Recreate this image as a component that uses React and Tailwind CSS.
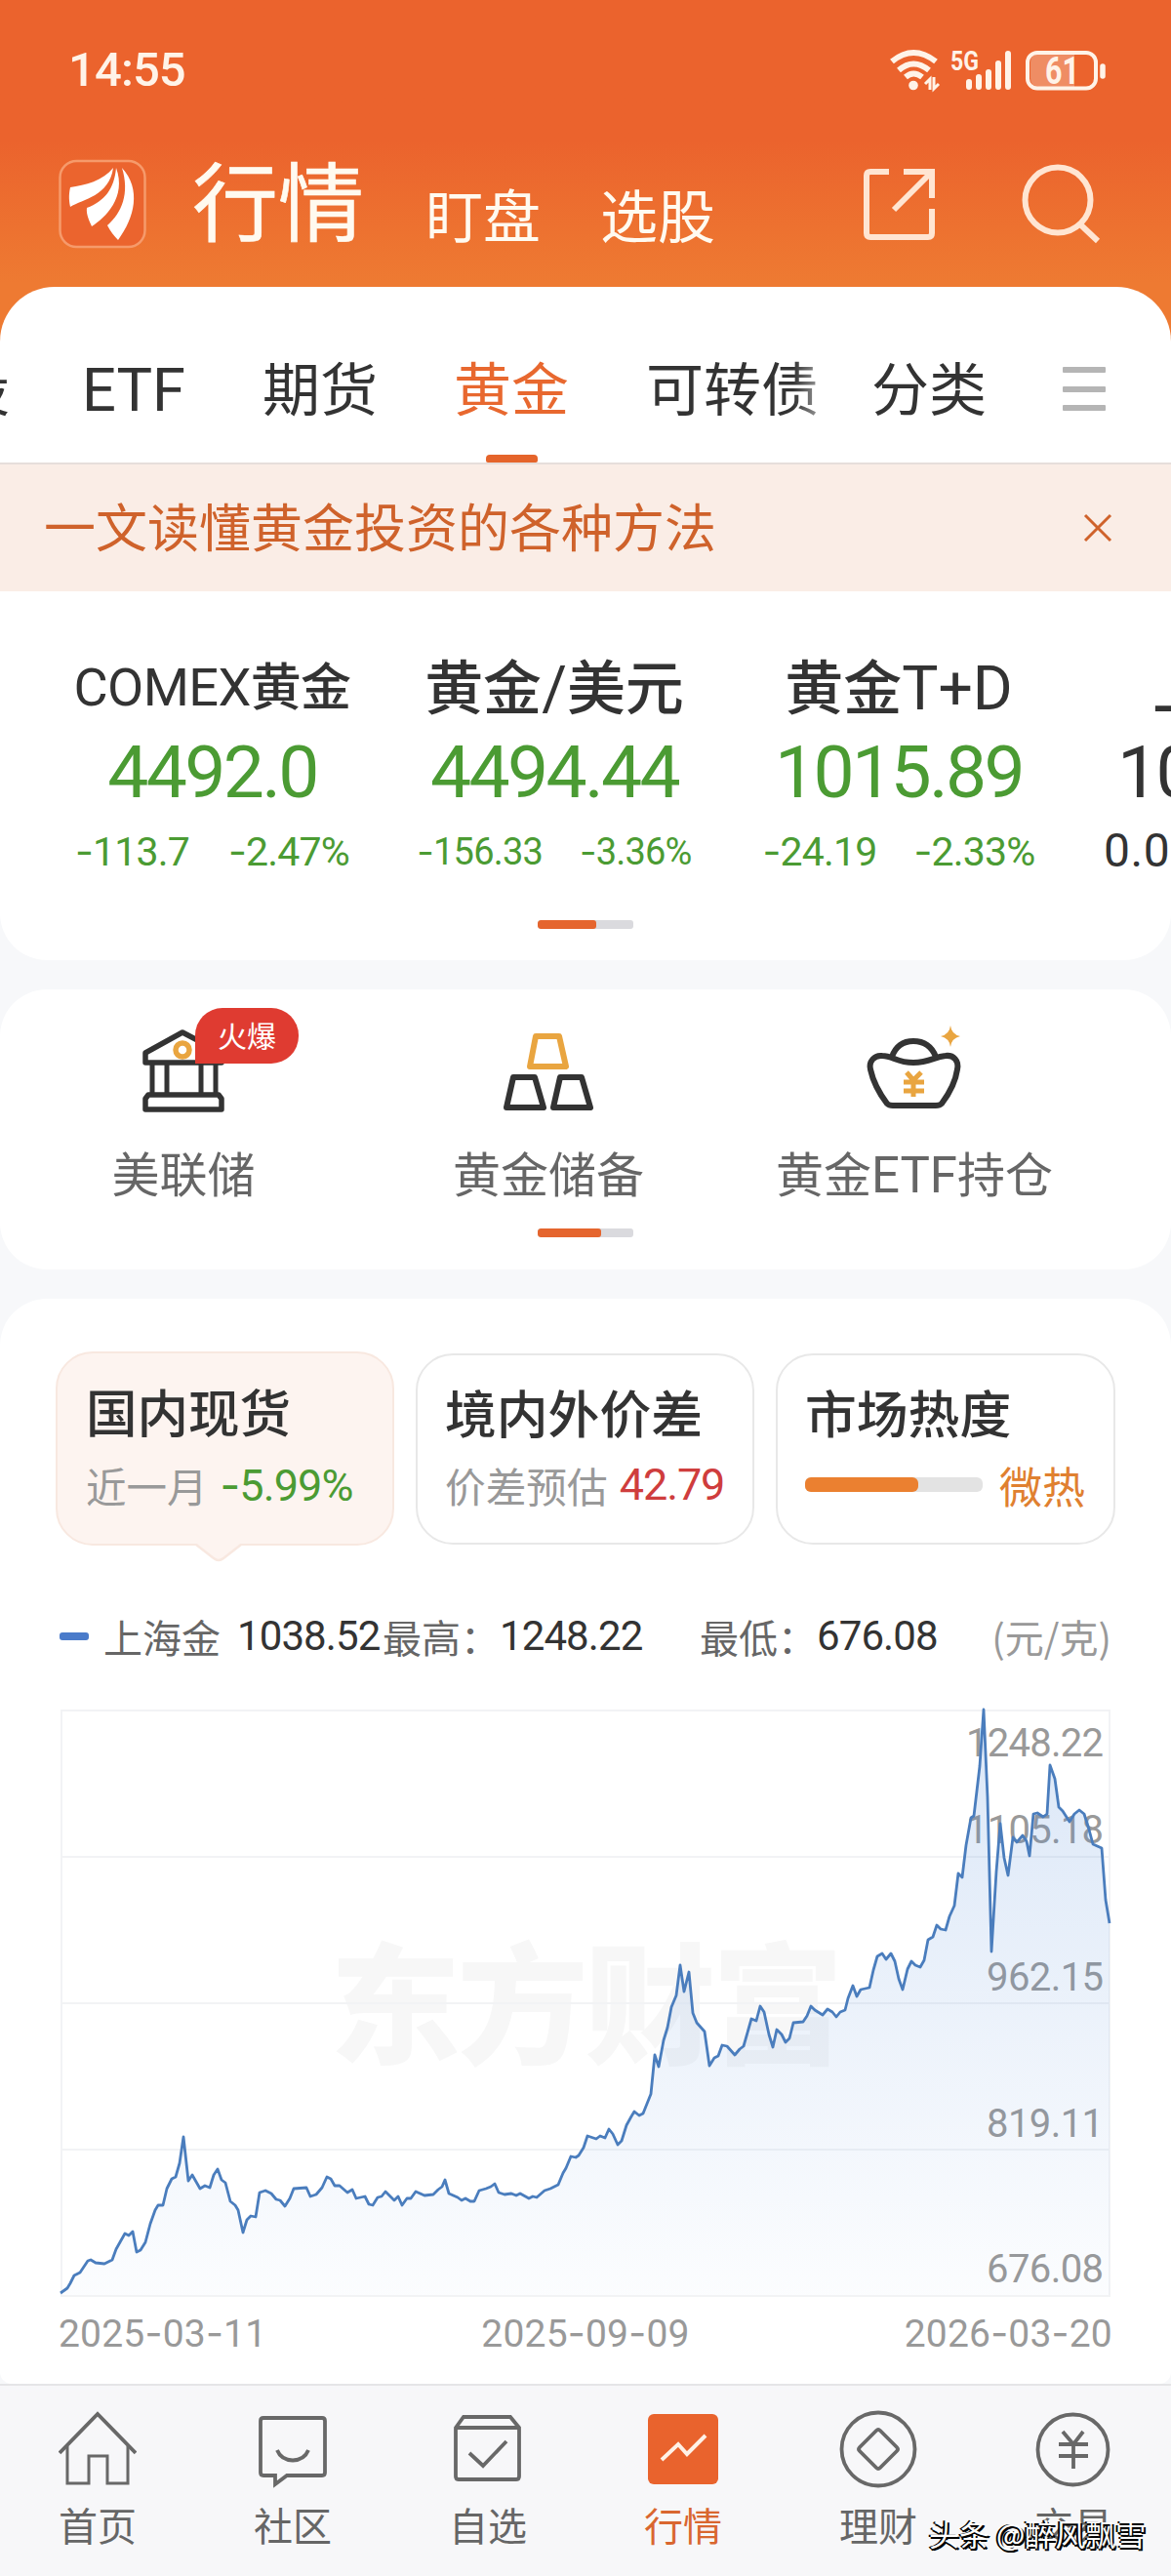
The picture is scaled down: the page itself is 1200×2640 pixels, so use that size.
import { clsx } from "clsx";

const quotes = [
  {
    name: "COMEX黄金",
    price: "4492.0",
    change: "-113.7",
    percent: "-2.47%",
    box: "ml-[55px] w-[325px]",
    title: "text-[52px] tracking-[-0.600px]",
    detail: "text-[41px] tracking-[-0.800px] gap-[40px]",
  },
  {
    name: "黄金/美元",
    price: "4494.44",
    change: "-156.33",
    percent: "-3.36%",
    box: "ml-[27px] w-[322px]",
    title: "text-[60px]",
    detail: "text-[38px] tracking-[-0.800px] gap-[38px]",
  },
  {
    name: "黄金T+D",
    price: "1015.89",
    change: "-24.19",
    percent: "-2.33%",
    box: "ml-[32px] w-[320px]",
    title: "text-[60px]",
    detail: "text-[41px] tracking-[-0.800px] gap-[38px]",
  },
];

const chartPoints = [
  [0, 598], [7, 593], [10, 588], [14, 580], [20, 577], [28, 565], [31, 564], [36, 567], [45, 568], [53, 564],
  [57, 553], [66, 537], [70, 539], [74, 535], [78, 556], [82, 554], [87, 546], [92, 527], [97, 513], [100, 508],
  [105, 508], [109, 491], [114, 481], [118, 479], [122, 465], [126, 438], [131, 483], [135, 477], [143, 491], [148, 488],
  [153, 490], [157, 477], [161, 471], [165, 482], [169, 485], [174, 504], [179, 508], [182, 513], [187, 536], [191, 523],
  [195, 519], [200, 520], [204, 495], [210, 493], [216, 496], [221, 502], [225, 503], [230, 509], [235, 501], [239, 491],
  [252, 490], [256, 499], [262, 497], [268, 490], [273, 479], [277, 481], [281, 488], [286, 488], [294, 495], [299, 492],
  [303, 501], [312, 499], [316, 507], [320, 508], [325, 500], [329, 499], [333, 494], [342, 503], [346, 499], [350, 508],
  [355, 501], [359, 501], [364, 494], [373, 498], [382, 497], [387, 492], [391, 489], [394, 482], [398, 496], [407, 500],
  [411, 503], [415, 501], [420, 504], [424, 504], [429, 493], [436, 491], [441, 489], [445, 486], [449, 495], [455, 497],
  [462, 496], [467, 498], [471, 496], [480, 501], [484, 499], [488, 500], [496, 493], [502, 491], [510, 487], [515, 475],
  [518, 470], [523, 458], [528, 459], [531, 457], [536, 449], [540, 437], [549, 440], [553, 437], [558, 439], [562, 430],
  [566, 435], [571, 446], [575, 442], [580, 426], [585, 417], [588, 412], [593, 416], [597, 414], [601, 404], [605, 394],
  [609, 354], [613, 366], [618, 339], [622, 326], [626, 305], [631, 293], [635, 262], [639, 289], [644, 269], [648, 311],
  [652, 321], [660, 330], [665, 365], [670, 357], [674, 355], [678, 344], [683, 345], [691, 354], [696, 348], [700, 345],
  [704, 331], [708, 317], [713, 319], [717, 304], [721, 310], [726, 333], [730, 346], [734, 328], [739, 333], [743, 341],
  [747, 337], [751, 321], [761, 320], [765, 314], [769, 304], [773, 308], [781, 313], [786, 307], [791, 310], [795, 315],
  [799, 310], [804, 308], [807, 296], [812, 283], [816, 294], [820, 287], [829, 285], [833, 267], [837, 253], [842, 250],
  [846, 256], [851, 250], [855, 258], [859, 276], [863, 287], [868, 266], [872, 258], [876, 262], [881, 264], [885, 257],
  [889, 236], [894, 233], [898, 221], [902, 225], [907, 226], [911, 212], [916, 201], [920, 168], [924, 172], [928, 139],
  [933, 111], [936, 109], [942, 58], [946, 0], [950, 90], [954, 248], [959, 166], [963, 117], [967, 152], [971, 170],
  [976, 131], [980, 136], [986, 129], [990, 135], [993, 150], [997, 107], [1001, 106], [1007, 110], [1011, 107], [1014, 57],
  [1019, 71], [1023, 100], [1027, 104], [1034, 115], [1039, 107], [1044, 103], [1049, 107], [1054, 123], [1058, 138],
  [1067, 142], [1071, 195], [1075, 219],
];

const priceLabels = [
  { text: "1248.22", y: 48 },
  { text: "1105.18", y: 137 },
  { text: "962.15", y: 288 },
  { text: "819.11", y: 438 },
  { text: "676.08", y: 587 },
];

// Roboto digits with the longer Inter minus
function Num({ children, className }) {
  return (
    <span className={clsx("font-[Roboto]", className)}>
      {children.split(/(-)/).map((part, i) =>
        part === "-" ? <span key={i} className="font-[Inter]">-</span> : part
      )}
    </span>
  );
}

// latin runs inside a chinese label
function Mixed({ children }) {
  return children.split(/([A-Z/+]+)/).map((part, i) =>
    /^[A-Z/+]+$/.test(part) ? <span key={i} className="font-[Roboto] text-[1.04em] font-normal">{part}</span> : part
  );
}

function StatusBar() {
  return (
    <div className="flex h-[145px] pl-[70px] pr-[65px] text-[#fff3e8]">
      <span className="mt-[46px] font-[Roboto] text-[49px] leading-[52px] font-medium tracking-[-0.900px]">14:55</span>
      <svg className="mt-[48px] ml-auto" width="224" height="48" viewBox="0 0 224 48" fill="none" stroke="currentColor">
        <g strokeWidth="6">
          <path d="M3 15Q25 -3 48 15" />
          <path d="M10 24Q25 11 41 24" />
          <path d="M17 31Q25 24 34 31" />
        </g>
        <circle cx="25" cy="39.500" r="4.800" fill="currentColor" stroke="none" />
        <path d="M42 44V33L37 38M46 31V43L51 38" strokeWidth="3" />
        <g strokeWidth="6" strokeLinecap="round">
          <path d="M82 36V41M92 31V41M102 26V41M112 17V41M122 7V41" />
        </g>
        <text x="63" y="24" className="font-[Roboto] text-[27px] font-bold" fill="currentColor" stroke="none" textLength="29" lengthAdjust="spacingAndGlyphs">5G</text>
        <path d="M154 7H190V41H154Q145 41 145 32V16Q145 7 154 7Z" fill="#ef8d64" stroke="none" />
        <rect x="142" y="6" width="70" height="36.500" rx="10" strokeWidth="4" />
        <path d="M219 20V30" strokeWidth="5.500" strokeLinecap="round" />
        <text x="160" y="38" className="font-[Roboto] text-[38px] font-bold" fill="currentColor" stroke="none" textLength="35" lengthAdjust="spacingAndGlyphs">61</text>
      </svg>
    </div>
  );
}

function Header() {
  return (
    <header className="flex h-[149px] items-start text-[#fffaf0]">
      <svg className="mt-[18px] ml-[60px]" width="90" height="92" viewBox="0 0 90 92">
        <rect x="1.500" y="2" width="87" height="88" rx="17" fill="#eb642e" stroke="#f69a6b" strokeWidth="2.500" />
        <path d="M56 9C46 22 27 27 12 29C10 38 11 44 12 49C25 41 52 38 56 9Z" fill="#fff" />
        <path d="M59 9C57 31 47 43 29 50C28 57 32 64 34 69C48 60 70 39 59 9Z" fill="#fff" />
        <path d="M65 9C73 35 65 55 50 68C53 74 57 79 61 83C78 60 85 31 65 9Z" fill="#fff" />
      </svg>
      <h1 className="mt-[13px] ml-[47px] text-[88px] leading-[88px] font-normal [-webkit-text-stroke:0.600px_currentColor]">行情</h1>
      <span className="mt-[44px] ml-[63px] text-[59px] leading-[59px]">盯盘</span>
      <span className="mt-[44px] ml-[61px] text-[59px] leading-[59px]">选股</span>
      <svg className="mt-[25px] ml-[150px]" width="76" height="78" viewBox="0 0 76 78" fill="none" stroke="#ffe5d2" strokeWidth="6">
        <path d="M28 6H9Q5 6 5 10V69Q5 73 9 73H68Q72 73 72 69V44" />
        <path d="M43 6H72V33" />
        <path d="M71 7L33 45" />
      </svg>
      <svg className="mt-[22px] ml-[86px]" width="84" height="84" viewBox="0 0 84 84" fill="none" stroke="#ffe5d2" strokeWidth="6">
        <circle cx="39" cy="38" r="33.500" />
        <path d="M62 63L80 80" />
      </svg>
    </header>
  );
}

function Tabs() {
  return (
    <div className="h-[180px] overflow-hidden rounded-t-[56px] bg-white">
      <nav className="flex h-full pt-[72px] text-[59px] leading-[59px] whitespace-nowrap text-[#333]">
        <span className="-ml-[49px]">股</span>
        <span className="ml-[74px] w-[110px]">
          <Mixed>ETF</Mixed>
        </span>
        <span className="ml-[75px]">期货</span>
        <span className="ml-[78px] flex flex-col items-center text-[#e8682f]">
          黄金
          <i className="mt-[41px] h-[8px] w-[53px] rounded-t-[4px] rounded-b-[2px] bg-[#e5642b]" />
        </span>
        <span className="ml-[79px] bg-gradient-to-r from-[#333] from-85% to-[#999] bg-clip-text text-transparent">可转债</span>
        <span className="ml-[54px]">分类</span>
        <div className="mt-[10px] ml-[78px] flex flex-col gap-[13.500px]">
          <i className="h-[6px] w-[44px] rounded-[1px] bg-[#b5b5b5]" />
          <i className="h-[6px] w-[44px] rounded-[1px] bg-[#b5b5b5]" />
          <i className="h-[6px] w-[44px] rounded-[1px] bg-[#b5b5b5]" />
        </div>
      </nav>
    </div>
  );
}

function Banner() {
  return (
    <div className="flex h-[132px] items-start justify-between border-t-2 border-[#e6dedb] bg-[#faede6] pr-[60px] pl-[45px]">
      <span className="mt-[34px] text-[53px] leading-[56px] text-[#cf622b]">一文读懂黄金投资的各种方法</span>
      <svg className="mt-[50px]" width="30" height="30" viewBox="0 0 30 30" stroke="#cf622b" strokeWidth="3">
        <path d="M2 2L28 28M28 2L2 28" />
      </svg>
    </div>
  );
}

function Pager({ fill }) {
  return (
    <div className="mx-auto h-[9px] w-[98px] overflow-hidden rounded-[3px] bg-[#dadade]">
      <div className={clsx("h-full rounded-[3px] bg-[#e5652e]", fill)} />
    </div>
  );
}

function Quotes() {
  return (
    <section className="h-[378px] overflow-hidden rounded-b-[48px] bg-white pt-[62px]">
      <div className="flex h-[275px] text-[#4b9b33]">
        {quotes.map((q) => (
          <div key={q.name} className={clsx("flex shrink-0 flex-col items-center whitespace-nowrap", q.box)}>
            <span className={clsx("h-[68px] leading-[66px] font-medium text-[#333]", q.title)}>
              <Mixed>{q.name}</Mixed>
            </span>
            <Num className="mt-[11px] h-[88px] text-[75px] leading-[88px] tracking-[-2.700px]">{q.price}</Num>
            <div className={clsx("mt-[13px] flex h-[48px] leading-[48px]", q.detail)}>
              <Num>{q.change}</Num>
              <Num>{q.percent}</Num>
            </div>
          </div>
        ))}
        <div className="ml-[50px] flex shrink-0 flex-col whitespace-nowrap text-[#333]">
          <span className="ml-[50px] h-[68px] text-[60px] leading-[66px] font-medium">上海金</span>
          <Num className="mt-[11px] ml-[14px] h-[88px] text-[75px] leading-[88px] tracking-[-2.700px]">1038.52</Num>
          <Num className="mt-[13px] h-[48px] text-[48px] leading-[48px] tracking-[0.500px]">0.00</Num>
        </div>
      </div>
      <Pager fill="w-[60px]" />
    </section>
  );
}

function BankIcon() {
  return (
    <svg width="84" height="86" viewBox="0 0 84 86" fill="none" stroke="#333" strokeWidth="5.500" strokeLinejoin="round">
      <path d="M3 24L41 3L81 24V34H3Z" />
      <path d="M10 35V67M25 35V67M60 35V67M75 35V67" strokeWidth="5" />
      <path d="M6 67H78L81 71V82H3V71Z" />
      <circle cx="41" cy="21" r="7" stroke="#e9a540" />
    </svg>
  );
}

function IngotsIcon() {
  return (
    <svg width="94" height="84" viewBox="0 0 94 84" fill="none" stroke="#333" strokeWidth="6" strokeLinejoin="round">
      <path d="M34 6H58L65 37H28Z" stroke="#e9a540" />
      <path d="M11 48H33L42 79H4Z" />
      <path d="M59 48H81L90 79H52Z" />
    </svg>
  );
}

function YuanbaoIcon() {
  return (
    <svg width="100" height="90" viewBox="0 0 100 90" fill="none" stroke="#333" strokeWidth="6" strokeLinejoin="round">
      <path d="M27 33C31 22 39 17 49 17C60 17 68 23 72 33" />
      <path d="M5 46C3 38 9 31 17 32C28 32 32 39 49 39C66 39 70 33 82 32C90 31 96 37 94 46C92 60 84 73 78 81C76 83 75 83 72 83H28C25 83 24 83 22 81C16 73 8 60 5 46Z" />
      <path d="M42 49L49 57L57 49M39 59H60M39 68H60M49 57V74" stroke="#e9a540" strokeWidth="5" strokeLinejoin="miter" />
      <path d="M87 1Q88 10 97 12Q88 14 87 23Q86 14 77 12Q86 10 87 1Z" fill="#e9a540" stroke="none" />
    </svg>
  );
}

function Shortcuts() {
  return (
    <section className="mt-[30px] h-[287px] rounded-[48px] bg-white pt-[36px]">
      <div className="flex h-[209px] text-[49px] leading-[50px] text-[#666]">
        <div className="ml-[88px] flex w-[200px] flex-col items-center">
          <div className="relative mt-[5px] h-[92px]">
            <BankIcon />
            <span className="absolute -top-[22px] left-[54px] flex h-[57px] w-[106px] items-center justify-center rounded-[28px] rounded-bl-none bg-[#df3b31] text-[30px] leading-[30px] text-white">
              <b className="-mt-[4px] font-normal">火爆</b>
            </span>
          </div>
          <span className="mt-[29px]">美联储</span>
        </div>
        <div className="ml-[174px] flex w-[200px] flex-col items-center whitespace-nowrap">
          <div className="mt-[6px] h-[91px]">
            <IngotsIcon />
          </div>
          <span className="mt-[29px]">黄金储备</span>
        </div>
        <div className="ml-[125px] flex w-[300px] flex-col items-center whitespace-nowrap">
          <div className="h-[97px]">
            <YuanbaoIcon />
          </div>
          <span className="mt-[29px]">
            <Mixed>黄金ETF持仓</Mixed>
          </span>
        </div>
      </div>
      <Pager fill="w-[65px]" />
    </section>
  );
}

function Cards() {
  return (
    <div className="flex items-center gap-[22px] px-[57px] pt-[54px] text-[#333]">
      <div className="relative h-[199px] w-[347px] rounded-[38px] border-[2.500px] border-[#f8e8e0] bg-[#fdf4f0] pl-[29px]">
        <p className="mt-[28px] text-[52.500px] leading-[60px] font-medium">国内现货</p>
        <p className="mt-[25px] flex text-[41.500px] leading-[44px] text-[#999]">
          近一月
          <Num className="ml-[13px] text-[45px] tracking-[-0.900px] text-[#4b9b33]">-5.99%</Num>
        </p>
        <svg className="absolute -bottom-[20px] left-[138px]" width="54" height="20" viewBox="0 0 54 20" fill="#fdf4f0" stroke="#f8e8e0" strokeWidth="2.500">
          <path d="M0 -2L4 1L22 15Q27 19 32 15L50 1L54 -2" />
        </svg>
      </div>
      <div className="h-[196px] w-[347px] rounded-[38px] border-[2.500px] border-[#e8e8e8] pl-[28px]">
        <p className="mt-[27px] text-[52.800px] leading-[60px] font-medium">境内外价差</p>
        <p className="mt-[24px] flex text-[41.700px] leading-[44px] text-[#999]">
          价差预估
          <Num className="ml-[12px] text-[45px] tracking-[-1.100px] text-[#cf3d3d]">42.79</Num>
        </p>
      </div>
      <div className="h-[196px] w-[348px] rounded-[38px] border-[2.500px] border-[#e8e8e8] pl-[28px]">
        <p className="mt-[27px] text-[52.800px] leading-[60px] font-medium">市场热度</p>
        <div className="mt-[24px] flex items-center">
          <div className="h-[15px] w-[182px] rounded-[6px] bg-[#e3e3e3]">
            <div className="h-full w-[116px] rounded-[6px] bg-[#eb8030]" />
          </div>
          <span className="ml-[17px] text-[44px] leading-[44px] text-[#e08030]">微热</span>
        </div>
      </div>
    </div>
  );
}

function Legend() {
  return (
    <div className="mt-[65px] flex h-[56px] items-center px-[61px] text-[40px] leading-[56px] whitespace-nowrap text-[#666]">
      <i className="h-[8px] w-[30px] rounded-[3px] bg-[#4a7bca]" />
      <span className="ml-[15px]">上海金</span>
      <Num className="ml-[17px] w-[149px] text-[42px] tracking-[-0.900px] text-[#333]">1038.52</Num>
      <span className="w-[120px]">最高：</span>
      <Num className="w-[205px] text-[42px] tracking-[-0.900px] text-[#333]">1248.22</Num>
      <span className="w-[120px]">最低：</span>
      <Num className="text-[42px] tracking-[-0.900px] text-[#333]">676.08</Num>
      <span className="ml-auto text-[#999]">(元/克)</span>
    </div>
  );
}

function Chart() {
  const line = chartPoints.map((p) => p.join(",")).join(" ");
  return (
    <>
      <svg className="mt-[47px] ml-[62px] overflow-visible" width="1076" height="602" viewBox="0 0 1076 602">
        <defs>
          <linearGradient id="area" gradientUnits="userSpaceOnUse" x1="0" y1="0" x2="0" y2="600">
            <stop offset="0" stopColor="#4a86d8" stopOpacity="0.2" />
            <stop offset="1" stopColor="#4a86d8" stopOpacity="0.02" />
          </linearGradient>
        </defs>
        <text x="276" y="353" className="text-[134px] font-black" fill="#f7f7f7" textLength="526">东方财富</text>
        <path d="M0 1H1076M0 151H1076M0 301H1076M0 451H1076M0 601H1076M1 0V602M1075 0V602" stroke="#f2f3f5" strokeWidth="2" />
        <g className="font-[Roboto] text-[40px]" fill="#999">
          {priceLabels.map((l) => (
            <text key={l.text} x="1069" y={l.y} textAnchor="end" textLength={l.text.length === 7 ? 141 : 120}>{l.text}</text>
          ))}
        </g>
        <polygon points={`0,600 ${line} 1075,600`} fill="url(#area)" />
        <polyline points={line} fill="none" stroke="#4a7dbd" strokeWidth="2.800" strokeLinejoin="round" />
      </svg>
      <div className="mt-[13px] flex justify-between px-[60px] text-[39px] leading-[48px] tracking-[0.200px] text-[#999]">
        <Num>2025-03-11</Num>
        <Num>2025-09-09</Num>
        <Num>2026-03-20</Num>
      </div>
    </>
  );
}

const navIcons = {
  home: (
    <>
      <path d="M1 44L40 4L79 44" />
      <path d="M9 37V75H31V47H50V75H71V37" strokeWidth="3" />
    </>
  ),
  community: (
    <>
      <path d="M10 8H70Q73 8 73 11V64Q73 67 70 67H34L22 76V67H10Q7 67 7 64V11Q7 8 10 8Z" />
      <path d="M24 41Q28 51 40 51.500Q52 51 56 41" />
    </>
  ),
  watch: (
    <>
      <path d="M15 7H63L72 18V68Q72 71 69 71H10Q7 71 7 68V18Z" />
      <path d="M7 18H72M21 44L35 57L59 32" />
    </>
  ),
  market: (
    <>
      <rect x="4" y="4" width="72" height="72" rx="6" fill="#e9632d" stroke="none" />
      <path d="M18 51L35 35L44 45L63 26" stroke="#fff1e6" strokeWidth="4" />
    </>
  ),
  wealth: (
    <>
      <circle cx="40" cy="40" r="37.500" />
      <path d="M38 21Q40 19 42 21L59 38Q61 40 59 42L42 59Q40 61 38 59L21 42Q19 40 21 38Z" />
    </>
  ),
  trade: (
    <>
      <circle cx="39.500" cy="40.500" r="36" />
      <path d="M29 22L40 35L50 22M25 35H55M25 47H55M40 35V60" />
    </>
  ),
};

const navItems = [
  { icon: "home", label: "首页" },
  { icon: "community", label: "社区" },
  { icon: "watch", label: "自选" },
  { icon: "market", label: "行情", active: true },
  { icon: "wealth", label: "理财" },
  { icon: "trade", label: "交易" },
];

function BottomNav() {
  return (
    <footer className="relative flex h-[197px] border-t-2 border-[#e5e5e7] bg-[#f7f7f9]">
      {navItems.map((item) => (
        <div key={item.icon} className={clsx("flex w-[200px] flex-col items-center pt-[25px]", item.active ? "text-[#d9662f]" : "text-[#666]")}>
          <svg width="80" height="80" viewBox="0 0 80 80" fill="none" stroke="#686868" strokeWidth="3.800">
            {navIcons[item.icon]}
          </svg>
          <span className="mt-[15px] text-[40px] leading-[44px]">{item.label}</span>
        </div>
      ))}
      <span className="absolute top-[131px] left-[952px] text-[31px] leading-[40px] whitespace-nowrap text-white [text-shadow:-2px_0_0_#000,0_2px_0_#000,2px_2px_0_#000]">
        头条 @醉风飘雪
      </span>
    </footer>
  );
}

export default function App() {
  return (
    <div className="h-[2640px] w-[1200px] overflow-hidden bg-[#f7f8fa] font-['Noto_Sans_CJK_SC',sans-serif]">
      <div className="bg-gradient-to-b from-[#eb632d] from-[145px] to-[#ee7a32] to-[290px]">
        <StatusBar />
        <Header />
        <Tabs />
      </div>
      <Banner />
      <Quotes />
      <Shortcuts />
      <section className="mt-[30px] h-[1112px] rounded-t-[48px] rounded-b-[12px] bg-white">
        <Cards />
        <Legend />
        <Chart />
      </section>
      <BottomNav />
    </div>
  );
}
